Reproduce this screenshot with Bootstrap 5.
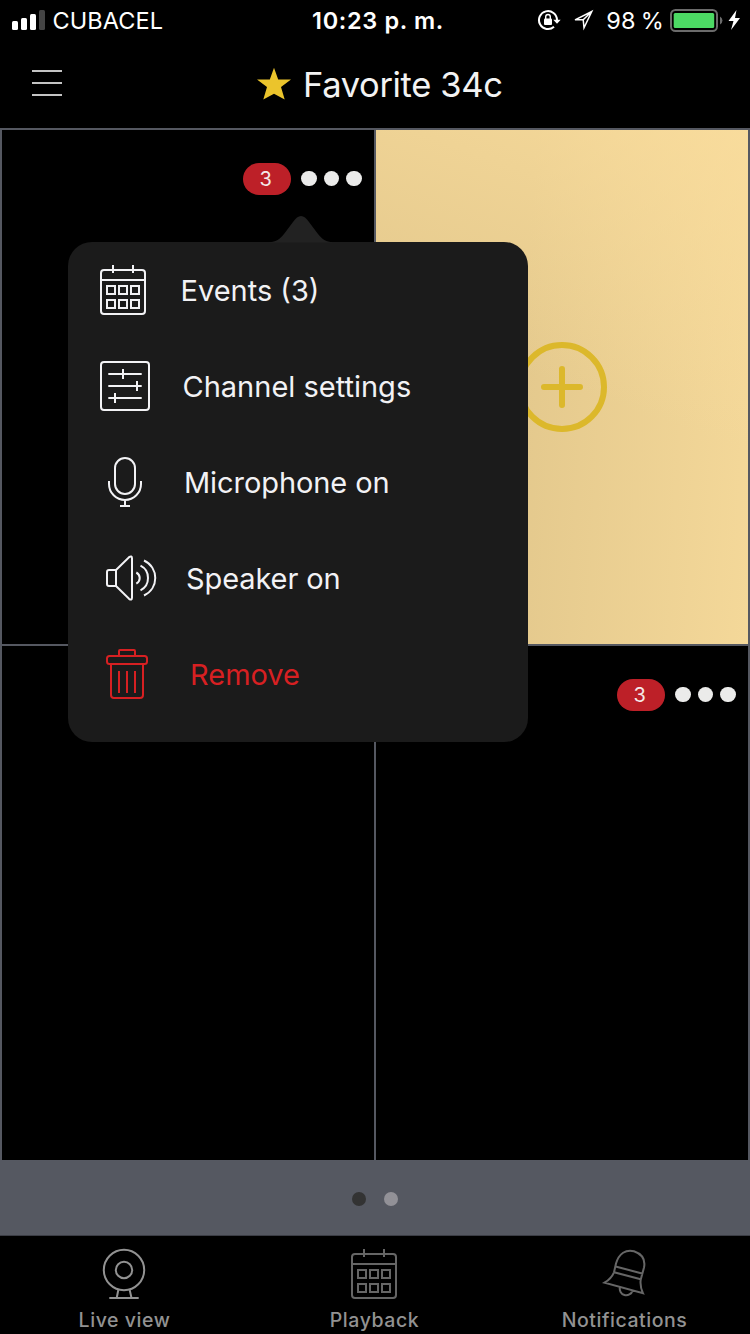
<!DOCTYPE html>
<html lang="en">
<head>
<meta charset="utf-8">
<meta name="viewport" content="width=device-width, initial-scale=1">
<title>Favorite 34c</title>
<link href="https://cdn.jsdelivr.net/npm/bootstrap@5.3.0/dist/css/bootstrap.min.css" rel="stylesheet">
<style>
body{font-family:Inter,"Liberation Sans",sans-serif;background:#000;color:#fff;width:750px;height:1334px;overflow:hidden}
svg{display:block;flex:none;fill:none;stroke:currentColor;stroke-width:2}
.status{height:40px;font-size:23.5px;line-height:40px;padding:0 10px 0 12px}
.status>div{flex:1 1 0}
.signal{stroke:none}
.carrier{margin-left:6.5px;padding-top:1px;letter-spacing:.1px}
.clock{font-weight:600;letter-spacing:.65px;padding:1px 0 0 4px}
.arrow-icon{margin:0 12px 0 11px}
.pct{word-spacing:-1.5px;letter-spacing:.1px;padding-top:1px}
.titlebar{height:88px}
.hamb{color:#c4c4c4;margin:0 194px 2px 32px}
.titlebar h1{font-size:34.5px;font-weight:400;line-height:44px;color:#f3f3f3;letter-spacing:-.35px;padding:2px 0 0 11px}
.cams{grid-template:514px 514px/372px 372px;gap:2px;padding:2px 2px 0;background:#555861}
.cam{background:#000;padding:33px 0 0 240.5px}
.cam-empty{padding:0;color:#dcb82b;background:linear-gradient(20deg,rgba(250,221,157,0) 50%,rgba(250,221,157,.8) 100%),linear-gradient(93deg,#e4c98d 40%,#f4d899 100%)}
.count{width:48.5px;height:32px;border-radius:16px;background:#bd2028;font-size:20px;font-weight:400;color:#f4e9e9;padding:0 2px 0 0}
.more{gap:7px;margin:0 0 1px 10px}
.more-dot{width:15.5px;height:15.5px;border-radius:50%;background:#ebebea}
.pager{height:76px;padding-top:2px;background:#555861;border-bottom:1px solid #3b3d45;gap:18px}
.pager span{width:14px;height:14px;border-radius:50%;background:#929197}
.pager .current{background:#333}
.tabs{height:98px;color:#929292;font-size:19.5px;font-weight:500;letter-spacing:.55px}
.tabs a{color:inherit;text-decoration:none;padding:10px 2px 0 0}
.tabs .dim{color:#666}
.tabs span{line-height:24px;margin-top:6px;padding-left:1px}
.popmenu{position:absolute;left:68px;top:242px;width:460px;height:500px;border-radius:24px;background:#1b1b1b;color:#f2f2f5}
.popmenu .tip{position:absolute;left:198px;top:-26px}
.popmenu a{height:96px;color:inherit;text-decoration:none;font-size:29px;line-height:40px}
.popmenu a span{padding-top:2px}
.popmenu a.danger{color:#d72022}
.icon-a{margin-left:32px}
.icon-b{margin-left:38px}
.icon-c{margin-left:40px}
</style>
</head>
<body class="d-flex flex-column position-relative">
<div class="status d-flex align-items-center">
  <div class="d-flex align-items-center">
    <svg class="signal" width="34" height="20"><g fill="#fff"><rect y="11" width="6" height="9" rx="1.5"/><rect x="9" y="8" width="6" height="12" rx="1.5"/><rect x="18" y="4" width="6" height="16" rx="1.5"/><rect x="27" width="6" height="20" rx="1.5" fill="#444"/></g></svg>
    <span class="carrier">CUBACEL</span>
  </div>
  <div class="clock text-center text-nowrap">10:23 p. m.</div>
  <div class="d-flex align-items-center justify-content-end">
    <svg width="24" height="22" viewBox="0 0 24 22"><path d="M17 17.800A9 9 0 1 1 20 11"/><path d="M16.300 10.700h7.400l-3.700 4z" fill="#fff" stroke="none"/><rect x="7" y="9.500" width="8" height="6.500" rx="1" fill="#fff" stroke="none"/><path d="M8.700 10V7.800a2.300 2.300 0 0 1 4.600 0V10" stroke-width="1.400"/></svg>
    <svg class="arrow-icon" width="22" height="22" viewBox="2 0 22 22"><path d="M21.800 2.500 5 10.800h8.200l.8 8z M13.200 10.800l8.600-8.300" stroke-width="1.500"/></svg>
    <span class="text-nowrap pct">98 %</span>
    <svg class="ms-1" width="72" height="24" viewBox="0 0 72 24"><rect x="3" y="2" width="46" height="21" rx="4.500" stroke="#6b6b6b"/><rect x="5.700" y="5" width="40.500" height="15" rx="1.500" fill="#4cd964" stroke="none"/><path d="M52 8.500a4.500 4.500 0 0 1 0 8z" fill="#6b6b6b" stroke="none"/><path d="M68.500 2 60.500 13h5l-2.500 9L72 10h-5z" fill="#fff" stroke="none"/></svg>
  </div>
</div>
<header class="titlebar navbar p-0 flex-nowrap justify-content-start">
  <svg class="hamb" width="30" height="26"><path d="M0 1h30M0 13h30M0 25h30"/></svg>
  <svg width="36" height="34" viewBox="0 0.300 36 34"><path d="M18 1l4.200 11.800H35L25 20.200l3.700 12.500L18 27 7.300 32.700 11 20.200 1 12.800h12.800z" fill="#ebc42c" stroke="none"/></svg>
  <h1 class="mb-0 text-nowrap">Favorite 34c</h1>
</header>
<main class="cams d-grid">
  <section class="cam d-flex align-items-start"><div class="d-flex align-items-center"><span class="count badge d-flex align-items-center justify-content-center">3</span><div class="more d-flex"><i class="more-dot"></i><i class="more-dot"></i><i class="more-dot"></i></div></div></section>
  <section class="cam cam-empty d-flex align-items-center justify-content-center"><svg width="90" height="90"><circle cx="45" cy="45" r="42" stroke-width="6"/><path d="M27 45h36M45 27v36" stroke-width="6" stroke-linecap="round"/></svg></section>
  <section class="cam"></section>
  <section class="cam d-flex align-items-start"><div class="d-flex align-items-center"><span class="count badge d-flex align-items-center justify-content-center">3</span><div class="more d-flex"><i class="more-dot"></i><i class="more-dot"></i><i class="more-dot"></i></div></div></section>
</main>
<div class="pager d-flex align-items-center justify-content-center"><span class="current"></span><span></span></div>
<nav class="tabs row g-0">
  <a href="#" class="col-4 d-flex flex-column align-items-center"><svg width="50" height="56"><circle cx="25" cy="24" r="20.200"/><circle cx="25" cy="24" r="8.200"/><path d="M19.300 44l-1.600 8M30.700 44l1.800 8M10.300 52h29.400"/></svg><span>Live view</span></a>
  <a href="#" class="col-4 d-flex flex-column align-items-center"><svg class="dim" width="48" height="56" viewBox="-1 -3 48 56"><path d="M1 15h44M13 0v8M33 0v8"/><rect x="1" y="5" width="44" height="44" rx="3"/><path d="M7 21h8v8H7zM19 21h8v8h-8zM31 21h8v8h-8zM7 35h8v8H7zM19 35h8v8h-8zM31 35h8v8h-8z"/></svg><span>Playback</span></a>
  <a href="#" class="col-4 d-flex flex-column align-items-center"><svg class="dim" width="50" height="56"><path d="M15 26.300 17 17.500C20 7.500 27 3 35 5.200 43 8 46.500 14 45 21.500L41.700 33.700C41 39 42 43 44 47.300L5.500 36.700C10 34 13 31 15 26.300L41.700 33.200M16.600 20.500l27.300 7.200M21 41a6.500 6.500 0 1 0 12.500 3.600"/></svg><span>Notifications</span></a>
</nav>

<div class="popmenu">
  <svg class="tip" width="70" height="27"><path d="M0 26.500C11 26 14 23 18 18L27 6Q35-6 43 6L52 18c4 5 7 8 18 8.500z" fill="#222" stroke="none"/></svg>
  <a href="#" class="d-flex align-items-center"><svg class="icon-a" width="46" height="50"><path d="M1 15h44M13 0v8M33 0v8"/><rect x="1" y="5" width="44" height="44" rx="3"/><path d="M7 21h8v8H7zM19 21h8v8h-8zM31 21h8v8h-8zM7 35h8v8H7zM19 35h8v8h-8zM31 35h8v8h-8z"/></svg><span style="margin-left:34.5px">Events (3)</span></a>
  <a href="#" class="d-flex align-items-center"><svg class="icon-a" width="50" height="50"><rect x="1" y="1" width="48" height="48" rx="3"/><path d="M8.300 13h33.400M8.300 25h33.400M8.300 37h33.400M23 8v10M37 20v10M15 32v10"/></svg><span style="margin-left:32.5px">Channel settings</span></a>
  <a href="#" class="d-flex align-items-center"><svg class="icon-c" width="34" height="50"><rect x="7" y="1" width="20" height="36" rx="10"/><path d="M1 24v3a16 16 0 0 0 32 0v-3M17 43v6M12 49h10"/></svg><span style="margin-left:42px;letter-spacing:-.08px">Microphone on</span></a>
  <a href="#" class="d-flex align-items-center"><svg class="icon-b" width="51" height="46"><path d="M10 15H3Q1 15 1 17V29Q1 31 3 31H10zM10 15 23 2.200Q26 .2 26 3.500V42.500Q26 45.800 23 43.800L10 31M30.300 17.500a6.300 6.300 0 0 1 0 11.200M34.500 10.700c10 5 10 19.600 0 24.600M38 5.500c15 7 15 28 0 35"/></svg><span style="margin-left:29px;letter-spacing:-.1px">Speaker on</span></a>
  <a href="#" class="danger d-flex align-items-center"><svg class="icon-b" width="42" height="50"><path d="M13 7V2q0-1 1-1h14q1 0 1 1v5M5 15V46q0 3 3 3H34q3 0 3-3V15M13 22v22M21 22v22M29 22v22"/><rect x="1" y="7" width="40" height="8" rx="2.500"/></svg><span style="margin-left:42px">Remove</span></a>
</div>
<script src="https://cdn.jsdelivr.net/npm/bootstrap@5.3.0/dist/js/bootstrap.bundle.min.js"></script>
</body>
</html>
